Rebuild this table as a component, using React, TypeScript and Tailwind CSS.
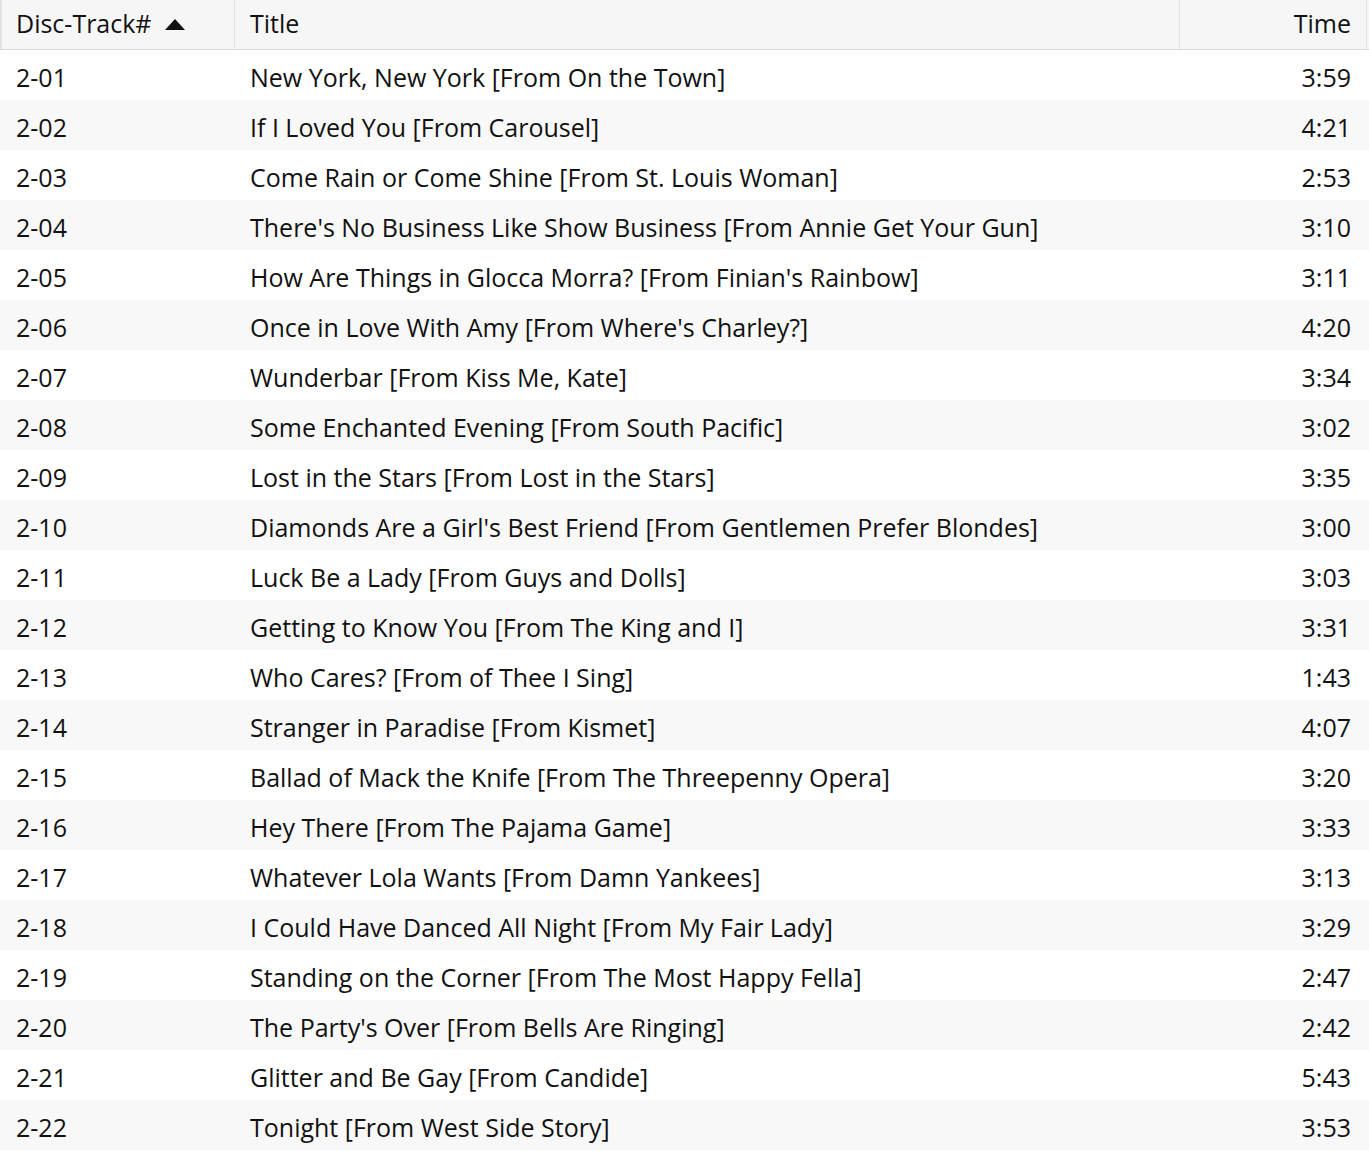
const tracks: [string, string, string][] = [
  ["2-01", "New York, New York [From On the Town]", "3:59"],
  ["2-02", "If I Loved You [From Carousel]", "4:21"],
  ["2-03", "Come Rain or Come Shine [From St. Louis Woman]", "2:53"],
  ["2-04", "There's No Business Like Show Business [From Annie Get Your Gun]", "3:10"],
  ["2-05", "How Are Things in Glocca Morra? [From Finian's Rainbow]", "3:11"],
  ["2-06", "Once in Love With Amy [From Where's Charley?]", "4:20"],
  ["2-07", "Wunderbar [From Kiss Me, Kate]", "3:34"],
  ["2-08", "Some Enchanted Evening [From South Pacific]", "3:02"],
  ["2-09", "Lost in the Stars [From Lost in the Stars]", "3:35"],
  ["2-10", "Diamonds Are a Girl's Best Friend [From Gentlemen Prefer Blondes]", "3:00"],
  ["2-11", "Luck Be a Lady [From Guys and Dolls]", "3:03"],
  ["2-12", "Getting to Know You [From The King and I]", "3:31"],
  ["2-13", "Who Cares? [From of Thee I Sing]", "1:43"],
  ["2-14", "Stranger in Paradise [From Kismet]", "4:07"],
  ["2-15", "Ballad of Mack the Knife [From The Threepenny Opera]", "3:20"],
  ["2-16", "Hey There [From The Pajama Game]", "3:33"],
  ["2-17", "Whatever Lola Wants [From Damn Yankees]", "3:13"],
  ["2-18", "I Could Have Danced All Night [From My Fair Lady]", "3:29"],
  ["2-19", "Standing on the Corner [From The Most Happy Fella]", "2:47"],
  ["2-20", "The Party's Over [From Bells Are Ringing]", "2:42"],
  ["2-21", "Glitter and Be Gay [From Candide]", "5:43"],
  ["2-22", "Tonight [From West Side Story]", "3:53"],
];

export default function App() {
  return (
    <div
      className="w-[1369px] bg-white text-[#111] text-[25px] leading-[30px]"
      style={{ fontFamily: '"Open Sans", "Noto Sans", sans-serif' }}
    >
      {/* header */}
      <div className="grid grid-cols-[235px_1fr_187px_2px] h-[50px] bg-[#f6f6f6] border-b border-[#dcdcdc]">
        <div className="flex items-center pl-[14px] pb-[4px] border-l-2 border-r border-[#e2e2e2]">
          <span>Disc-Track#</span>
          <svg className="ml-[13px] mt-[3px]" width="20" height="11" viewBox="0 0 20 11">
            <polygon points="10,0 20,11 0,11" fill="#111" />
          </svg>
        </div>
        <div className="flex items-center pl-[15px] pb-[4px] border-r border-[#e2e2e2]">Title</div>
        <div className="flex items-center justify-end pr-[15px] pb-[4px] border-r border-[#e2e2e2]">Time</div>
        <div />
      </div>
      {tracks.map(([num, title, time], i) => (
        <div
          key={num}
          className={`grid grid-cols-[235px_1fr_187px_2px] h-[50px] items-center pt-[3px] ${
            i % 2 === 1 ? "bg-[#f8f8f8]" : "bg-white"
          }`}
        >
          <div className="pl-4">{num}</div>
          <div className="pl-[15px]">{title}</div>
          <div className="text-right pr-[16px]">{time}</div>
          <div />
        </div>
      ))}
    </div>
  );
}
